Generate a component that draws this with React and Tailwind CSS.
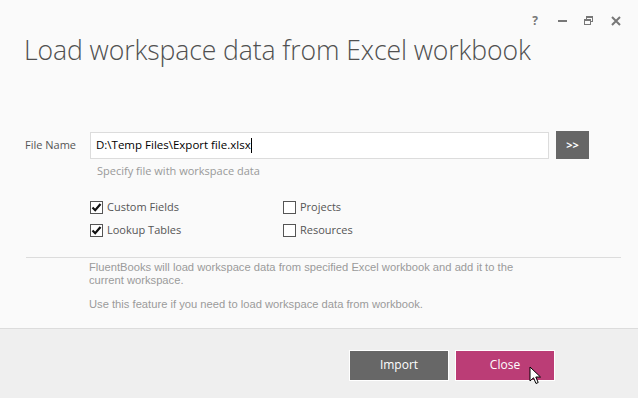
function Box({ checked, label }) {
  return (
    <label className="flex items-center gap-[4px] h-[13px]">
      <span className="w-[13px] h-[13px] border border-[#555] bg-white flex items-center justify-center">
        {checked && (
          <svg width="11" height="11" viewBox="0 0 11 11">
            <path d="M1.5 5.5 L4.2 8.2 L9.5 2" stroke="#111" strokeWidth="2.2" fill="none" />
          </svg>
        )}
      </span>
      <span className="text-[#555]">{label}</span>
    </label>
  );
}

export default function App() {
  return (
    <div
      className="w-[638px] h-[398px] bg-[#fafafa] flex flex-col relative overflow-hidden"
      style={{ fontFamily: '"Open Sans", "Noto Sans", sans-serif' }}
    >
      {/* window controls */}
      <div className="flex justify-end items-center gap-[14px] pr-[16px] pt-[12px] h-[30px] text-[#777]">
        <span className="w-[12px] text-center text-[12px] font-bold leading-none">?</span>
        <span className="w-[12px] flex justify-center ml-[1px]"><span className="w-[9px] h-[2px] bg-[#777]"></span></span>
        <svg width="12" height="12" viewBox="0 0 12 12" className="mx-[1px]">
          <rect x="3.5" y="1.5" width="6" height="5" fill="none" stroke="#777" />
          <rect x="1.5" y="4.5" width="6" height="5" fill="#fafafa" stroke="#777" />
          <line x1="1.5" y1="5" x2="7.5" y2="5" stroke="#777" strokeWidth="2" />
          <line x1="3.5" y1="2" x2="9.5" y2="2" stroke="#777" strokeWidth="2" />
        </svg>
        <svg width="12" height="12" viewBox="0 0 12 12">
          <path d="M2 2 L10 10 M10 2 L2 10" stroke="#777" strokeWidth="2" />
        </svg>
      </div>

      <h1 className="ml-[24px] mt-[2px] text-[26.6px] font-light text-[#505050] leading-[36px] tracking-[-0.1px]">
        Load workspace data from Excel workbook
      </h1>

      <div className="flex-1 px-[25px] pt-[63px] text-[11px]">
        <div className="flex items-center">
          <span className="w-[65px] text-[#555]">File Name</span>
          <div className="w-[459px] h-[27px] border border-[#dcdcdc] bg-white flex items-center pl-[5px] text-black text-[11.5px]">
            D:\Temp Files\Export file.xlsx<span className="w-[1px] h-[15px] bg-black"></span>
          </div>
          <button className="ml-[7px] w-[33px] h-[28px] bg-[#666] text-white text-[11px] font-bold">&gt;&gt;</button>
        </div>
        <div className="ml-[72px] mt-[4px] text-[11px] text-[#999]">Specify file with workspace data</div>

        <div className="ml-[65px] mt-[21px] grid grid-cols-[193px_1fr] gap-y-[10px]">
          <Box checked label="Custom Fields" />
          <Box label="Projects" />
          <Box checked label="Lookup Tables" />
          <Box label="Resources" />
        </div>

        <div className="mt-[20px] mr-[-8px] ml-[1px] border-t border-[#dcdcdc]"></div>

        <div
          className="ml-[64px] mt-[3px] w-[450px] text-[11.2px] leading-[13px] text-[#9a9a9a]"
          style={{ fontFamily: '"Liberation Sans", Arial, sans-serif' }}
        >
          <p>FluentBooks will load workspace data from specified Excel workbook and add it to the current workspace.</p>
          <p className="mt-[11px]">Use this feature if you need to load workspace data from workbook.</p>
        </div>
      </div>

      <div className="h-[70px] bg-[#efefef] border-t border-[#dcdcdc] flex items-center justify-end gap-[6px] pr-[83px] pt-[3px]">
        <button className="w-[100px] h-[31px] bg-[#676767] border border-white text-white text-[12px]">Import</button>
        <button className="w-[100px] h-[31px] bg-[#bb3d76] border border-white text-white text-[12px]">Close</button>
      </div>

      <svg width="14" height="20" viewBox="0 0 14 20" className="absolute left-[529px] top-[366px]">
        <path d="M1 1 L1 15 L4.5 11.8 L7 17.5 L9.2 16.5 L6.8 11 L11.5 11 Z" fill="white" stroke="black" strokeWidth="1" strokeLinejoin="round" />
      </svg>
    </div>
  );
}
